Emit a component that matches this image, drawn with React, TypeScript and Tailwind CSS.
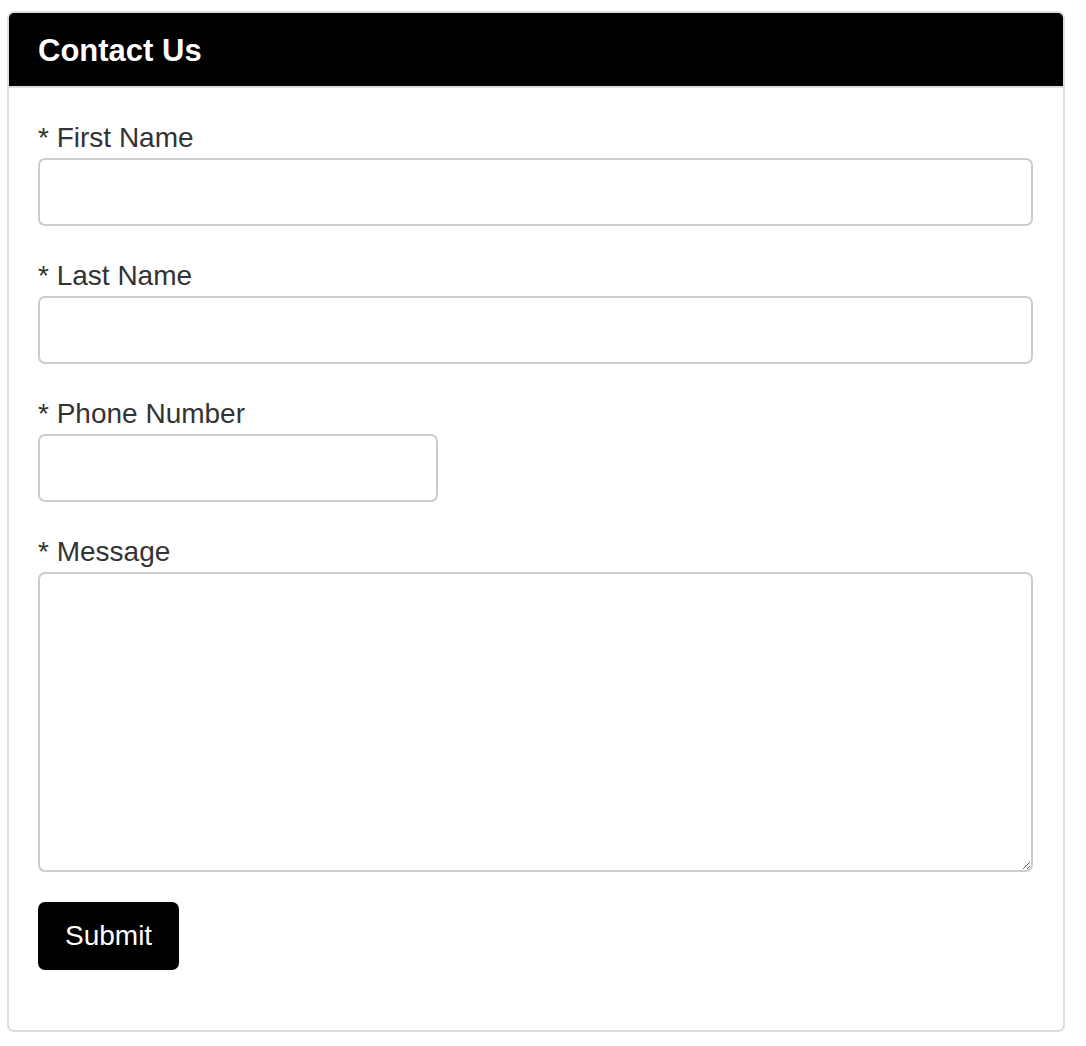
function Field({ label, short, area }: { label: string; short?: boolean; area?: boolean }) {
  return (
    <div className="mb-[30px] flex flex-col">
      <label className="text-[28px] leading-[40px] text-[#333333]">* {label}</label>
      {area ? (
        <textarea className="h-[300px] w-full rounded-[7px] border-2 border-[#cccccc] px-[24px] py-[12px] text-[28px] text-[#555555] outline-none" />
      ) : (
        <input
          type="text"
          className={`h-[68px] rounded-[7px] border-2 border-[#cccccc] px-[24px] py-[12px] text-[28px] text-[#555555] outline-none ${short ? "w-[400px]" : "w-full"}`}
        />
      )}
    </div>
  );
}

export default function App() {
  return (
    <div className="min-h-screen bg-white pt-[11px] pl-[7px] font-['Liberation_Sans',Arial,sans-serif]">
      <div className="w-[1058px] rounded-[7px] border-2 border-[#dddddd] bg-white">
        <div className="rounded-t-[5px] border-b-2 border-[#dddddd] bg-black pt-[20px] pb-[18px] pl-[29px] pr-[30px]">
          <h3 className="text-[31px] font-bold leading-[35px] text-white">Contact Us</h3>
        </div>
        <div className="pt-[30px] pb-[30px] pl-[29px] pr-[30px]">
          <Field label="First Name" />
          <Field label="Last Name" />
          <Field label="Phone Number" short />
          <Field label="Message" area />
          <div className="mb-[30px]">
            <button className="rounded-[7px] border-2 border-black bg-black px-[25px] py-[12px] text-[28px] leading-[40px] text-white">
              Submit
            </button>
          </div>
        </div>
      </div>
    </div>
  );
}
